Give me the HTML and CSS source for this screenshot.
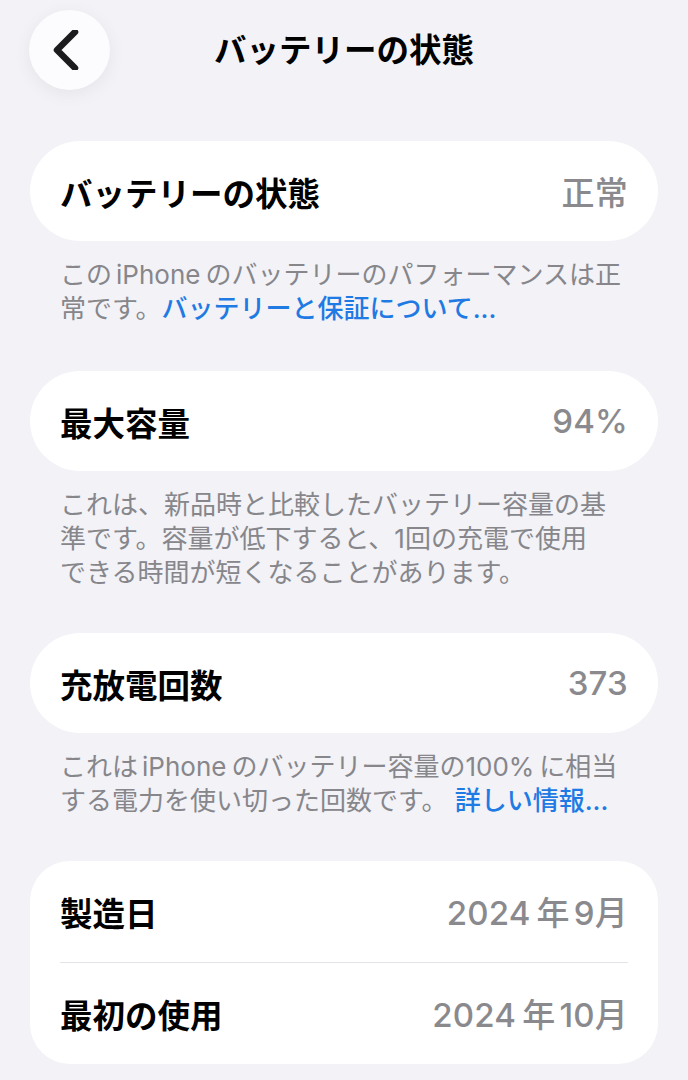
FILE: index.html
```html
<!DOCTYPE html>
<html lang="ja">
<head>
<meta charset="utf-8">
<title>バッテリーの状態</title>
<link rel="stylesheet" href="styles.css">
</head>
<body>
<div class="screen">
  <header class="nav">
    <button class="back" aria-label="戻る">
      <svg width="40" height="40" viewBox="0 0 40 40" aria-hidden="true">
        <path d="M27 2 L9 20 L27 38" fill="none" stroke="#1c1c1e" stroke-width="6.5" stroke-linecap="round" stroke-linejoin="round"/>
      </svg>
    </button>
    <h1 class="title">バッテリーの状態</h1>
  </header>

  <section class="group g1">
    <div class="card pill">
      <div class="row"><span class="label">バッテリーの状態</span><span class="value">正常</span></div>
    </div>
    <p class="note">この<span class="latin">iPhone</span>のバッテリーのパフォーマンスは正<br>常です。<a class="link">バッテリーと保証について...</a></p>
  </section>

  <section class="group g2">
    <div class="card pill">
      <div class="row"><span class="label">最大容量</span><span class="value">94%</span></div>
    </div>
    <p class="note">これは、新品時と比較したバッテリー容量の基<br>準です。容量が低下すると、1回の充電で使用<br>できる時間が短くなることがあります。</p>
  </section>

  <section class="group g3">
    <div class="card pill">
      <div class="row"><span class="label">充放電回数</span><span class="value">373</span></div>
    </div>
    <p class="note">これは<span class="latin">iPhone</span>のバッテリー容量の<span class="latin-r">100%</span>に相当<br>する電力を使い切った回数です。 <a class="link">詳しい情報...</a></p>
  </section>

  <section class="group g4">
    <div class="card rounded">
      <div class="row"><span class="label">製造日</span><span class="value">2024<span class="nen">年</span>9月</span></div>
      <div class="divider"></div>
      <div class="row"><span class="label">最初の使用</span><span class="value">2024<span class="nen">年</span>10月</span></div>
    </div>
  </section>
</div>
</body>
</html>
```

FILE: styles.css
```css
* { box-sizing: border-box; }
html, body {
  margin: 0;
  padding: 0;
  background: #f2f2f7;
}
body {
  font-family: Inter, "Noto Sans CJK JP", sans-serif;
  color: #000;
  width: 688px;
  height: 1080px;
  overflow: hidden;
}
.screen {
  padding: 10px 30px 0 30px;
}
.nav {
  position: relative;
  height: 80px;
  display: flex;
  align-items: center;
  justify-content: center;
}
.back {
  position: absolute;
  left: -1px;
  top: 0;
  width: 81px;
  height: 80px;
  border-radius: 50%;
  border: none;
  padding: 0;
  background: #fcfcfe;
  box-shadow: 0 4px 18px rgba(0, 0, 0, 0.06);
  display: flex;
  align-items: center;
  justify-content: center;
}
.back svg { margin-left: -4px; }
.title {
  margin: 0;
  font-size: 32.5px;
  font-weight: 700;
  color: #000;
  transform: translateY(-3px);
}
.card {
  background: #fff;
  padding: 0 30px;
}
.pill { border-radius: 50px; }
.rounded { border-radius: 40px; }
.row {
  height: 100px;
  display: flex;
  align-items: center;
  justify-content: space-between;
}
.rounded .row { height: 100.5px; }
.label {
  font-size: 32.5px;
  font-weight: 700;
  color: #000;
}
.value {
  font-size: 33px;
  font-weight: 500;
  color: #8a8a8e;
  letter-spacing: 0.2px;
}
.nen { margin: 0 4px 0 6px; }
.divider {
  height: 1.5px;
  background: #e3e3e8;
}
.note {
  margin: 17px 30px 0 30px;
  font-size: 26px;
  line-height: 34px;
  color: #86868b;
  white-space: nowrap;
}
.latin { margin: 0 5px 0 4px; }
.latin-r { margin: 0 5px 0 0; }
.g1 { margin-top: 51px; }
.g2 { margin-top: 45px; }
.g3 { margin-top: 43px; }
.g4 { margin-top: 43px; }
.link {
  color: #1f7ae3;
  font-weight: 500;
}
```
